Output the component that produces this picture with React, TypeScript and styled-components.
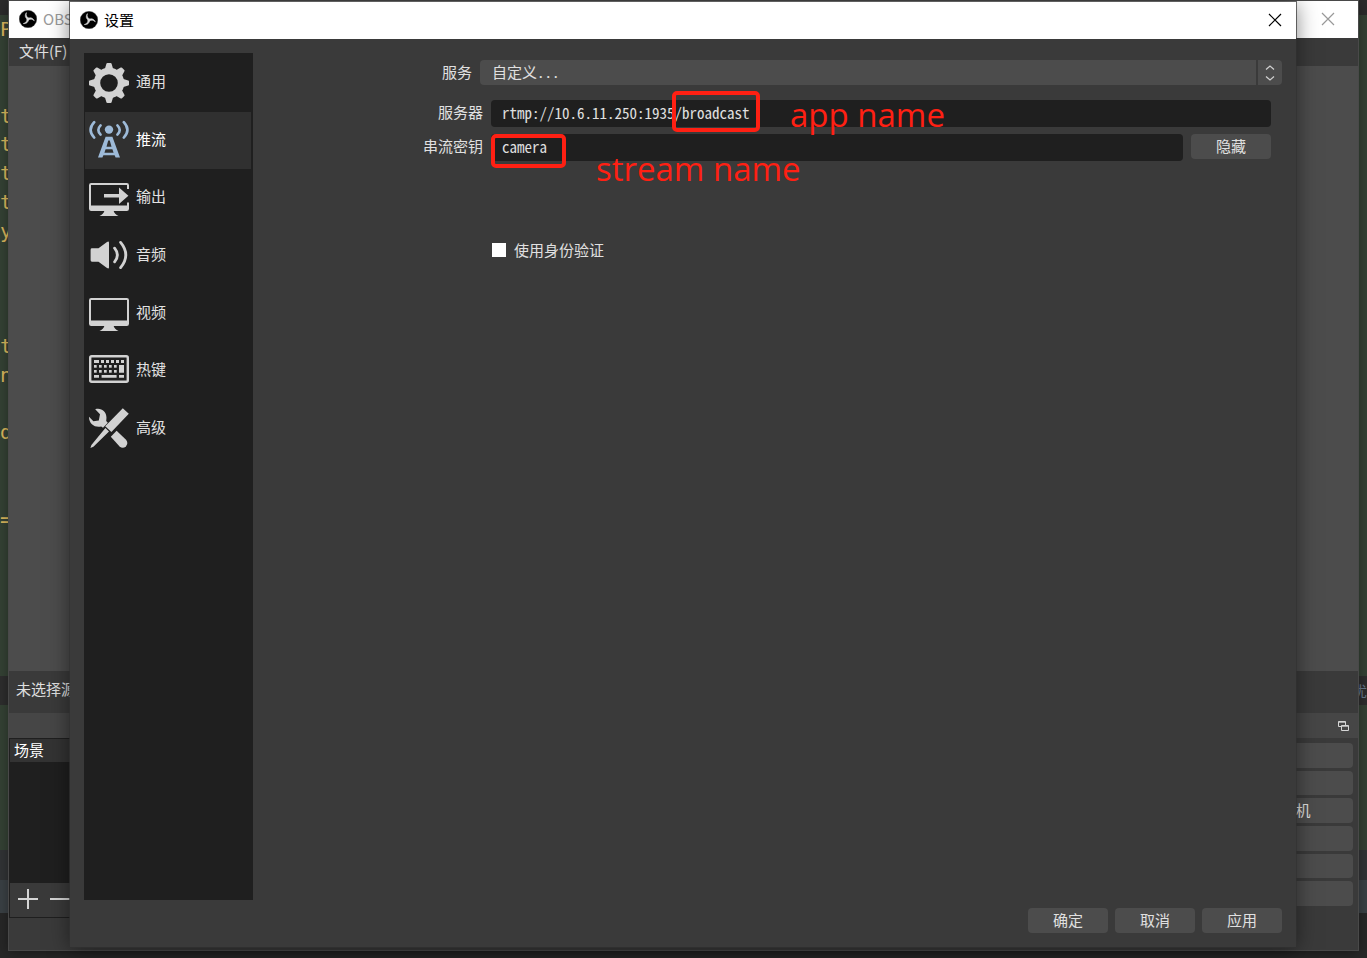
import React from 'react';
import styled, { createGlobalStyle } from 'styled-components';

const sans = '"Noto Sans CJK SC", "Open Sans", sans-serif';
const fixed = '"Noto Sans Mono CJK SC", "Noto Sans CJK SC", monospace';

const GlobalStyle = createGlobalStyle`
  * { box-sizing: border-box; }
  body { margin: 0; background: #272727; font-family: ${sans}; font-size: 15px; color: #e0e0e0; }
  button, input, select { font: inherit; color: inherit; border: 0; margin: 0; padding: 0; }
`;

const Desktop = styled.div`
  position: relative;
  display: flex;
  flex-direction: column;
  min-height: 100vh;
  overflow: hidden;
`;

const Band = styled.div<{ $color: string; $height?: number }>`
  background: ${(p) => p.$color};
  ${(p) => (p.$height ? `height: ${p.$height}px; flex: none;` : 'flex: 1;')}
`;

const StatusBand = styled(Band)`
  display: flex;
  align-items: center;
  justify-content: flex-end;
  color: #66788a;
`;

const CodeLines = styled.div`
  display: grid;
  grid-auto-rows: 1fr;
  align-items: center;
  height: 518px;
  font: 20px "DejaVu Sans Mono", monospace;
  line-height: 28px;
  color: #d8b55c;
`;

const Window = styled.section`
  position: absolute;
  display: flex;
  flex-direction: column;
  background: #3a3a3a;
`;

const MainWindow = styled(Window)`
  inset: 1px 9px 8px 9px;
  box-shadow: 0 0 0 1px #494949, 0 2px 12px rgba(0, 0, 0, 0.4);
  overflow: hidden;
`;

const Dialog = styled(Window)`
  inset: 2px 71px 11px 70px;
  box-shadow: 0 0 0 1px rgba(50, 50, 50, 0.7), 0 2px 20px rgba(0, 0, 0, 0.5);
`;

const TitleBar = styled.header<{ $muted?: boolean }>`
  display: flex;
  align-items: center;
  gap: 6px;
  height: 37px;
  flex: none;
  padding: 0 12px 2px 10px;
  background: #fff;
  color: ${(p) => (p.$muted ? '#999' : '#000')};
`;

const Title = styled.h1`
  flex: 1;
  margin: 0;
  font-size: 15px;
  font-weight: 400;
`;

const CloseButton = styled.button<{ $inset?: number }>`
  display: grid;
  place-items: center;
  width: 18px;
  height: 18px;
  margin-right: ${(p) => p.$inset ?? 0}px;
  background: none;
`;

const MenuBar = styled.nav`
  height: 28px;
  flex: none;
  padding: 0 10px;
  line-height: 26px;
`;

const Preview = styled.div`
  flex: 1;
  background: #4c4c4c;
`;

const SourceBar = styled.div`
  height: 42px;
  flex: none;
  padding: 0 7px;
  font-family: ${fixed};
  font-weight: 300;
  line-height: 36px;
`;

const DockTitle = styled.div`
  display: flex;
  align-items: center;
  justify-content: flex-end;
  height: 25px;
  flex: none;
  padding: 2px 9px 0;
  background: #464646;
`;

const Docks = styled.div`
  display: flex;
  justify-content: space-between;
  height: 212px;
  flex: none;
`;

const SceneDock = styled.div`
  display: flex;
  flex-direction: column;
  width: 200px;
  height: 180px;
  border: 1px solid #1f1f1f;
  background: #1f1f1f;
`;

const Scene = styled.div`
  height: 23px;
  padding-left: 4px;
  background: #333;
  color: #fff;
  line-height: 22px;
`;

const SceneTools = styled.div`
  display: flex;
  align-items: center;
  gap: 12px;
  height: 34px;
  margin-top: auto;
  padding: 0 0 2px 8px;
  background: #3a3a3a;
`;

const ToolButton = styled.button`
  display: grid;
  width: 20px;
  height: 20px;
  background: none;
`;

const ControlDock = styled.div`
  display: grid;
  grid-auto-rows: 1fr;
  gap: 3px;
  width: 190px;
  height: 163px;
  margin: 5px 5px 0 0;
`;

const Button = styled.button`
  min-width: 80px;
  height: 25px;
  padding-bottom: 2px;
  border-radius: 4px;
  background: #4c4c4c;
  font-family: ${fixed};
  font-weight: 300;
  line-height: 22px;
`;

const ControlButton = styled(Button)`
  height: auto;
`;

const DialogBody = styled.div`
  display: flex;
  flex: 1;
  gap: 14px;
  padding: 14px 14px 8px;
`;

const Sidebar = styled.nav`
  width: 169px;
  flex: none;
  padding: 1px 2px 1px 1px;
  background: #1f1f1f;
`;

const Categories = styled.div`
  display: grid;
  grid-auto-rows: 1fr;
  height: 403px;
`;

const Category = styled.a<{ $active?: boolean }>`
  display: flex;
  align-items: center;
  gap: 7px;
  padding-left: 4px;
  background: ${(p) => (p.$active ? '#303030' : 'none')};
  color: ${(p) => (p.$active ? '#fff' : '#e2e2e2')};
  text-decoration: none;
  svg { color: ${(p) => (p.$active ? '#9dbad8' : '#d2d2d2')}; flex: none; }
  span { padding-bottom: 4px; }
`;

const Form = styled.form`
  flex: 1;
  min-width: 0;
  padding-top: 7px;
  font-family: ${fixed};
  font-weight: 300;
`;

const Row = styled.div<{ $label: number; $inset?: number }>`
  display: flex;
  gap: 8px;
  margin-right: ${(p) => p.$inset ?? 0}px;
  margin-bottom: 7px;
  label { width: ${(p) => p.$label}px; flex: none; text-align: right; line-height: 24px; }
`;

const ServiceRow = styled(Row)`
  margin-bottom: 15px;
`;

const SelectBox = styled.div`
  position: relative;
  flex: 1;
`;

const Select = styled.select`
  display: block;
  width: 100%;
  height: 25px;
  padding: 0 0 2px 12px;
  border-radius: 4px;
  background: #4c4c4c;
  appearance: none;
`;

const SelectArrows = styled.span`
  position: absolute;
  inset: 0 0 0 auto;
  display: grid;
  place-items: center;
  width: 26px;
  border-left: 2px solid #3a3a3a;
  pointer-events: none;
`;

const Input = styled.input`
  flex: 1;
  min-width: 0;
  height: 27px;
  padding: 0 11px 2px;
  border-radius: 4px;
  background: #1f1f1f;
`;

const CheckRow = styled.label`
  display: flex;
  align-items: center;
  gap: 8px;
  margin: 78px 0 0 225px;
  line-height: 22px;
`;

const Checkbox = styled.input`
  width: 14px;
  height: 14px;
  appearance: none;
  background: #fff;
`;

const Footer = styled.footer`
  display: flex;
  justify-content: flex-end;
  gap: 7px;
  padding: 0 14px 14px;
`;

const Highlight = styled.div<{ $x: number; $y: number; $w: number; $h: number }>`
  position: absolute;
  left: ${(p) => p.$x}px;
  top: ${(p) => p.$y}px;
  width: ${(p) => p.$w}px;
  height: ${(p) => p.$h}px;
  border: 4px solid #ff2013;
  border-radius: 5px;
  pointer-events: none;
`;

const Note = styled.span<{ $x: number; $y: number }>`
  position: absolute;
  left: ${(p) => p.$x}px;
  top: ${(p) => p.$y}px;
  font: 33px "Open Sans", sans-serif;
  line-height: 44px;
  color: #ff2013;
  white-space: nowrap;
`;

const Logo = () => (
  <svg width="18" height="18" viewBox="0 0 18 18" aria-hidden="true">
    <circle cx="9" cy="9" r="8.8" fill="#000" stroke="#555" strokeWidth=".4" />
    {[0, 120, 240].map((a) => (
      <path
        key={a}
        d="M9 9.4C6.4 8.6 5.2 5.6 7.4 2.6C6.8 5.4 7.6 7.4 10 8.2Z"
        fill="#d8d8d8"
        stroke="#d8d8d8"
        strokeWidth=".5"
        transform={`rotate(${a} 9 9)`}
      />
    ))}
  </svg>
);

const Icon = ({ children }: { children: React.ReactNode }) => (
  <svg width="40" height="40" viewBox="0 0 40 40" fill="currentColor" aria-hidden="true">{children}</svg>
);

const Cross = ({ color }: { color: string }) => (
  <svg width="14" height="14" viewBox="0 0 14 14" stroke={color} strokeWidth="1.2" aria-hidden="true">
    <path d="M1 1 13 13M13 1 1 13" />
  </svg>
);

const GearIcon = () => (
  <Icon>
    <circle cx="20" cy="20" r="12" fill="none" stroke="currentColor" strokeWidth="6.4" />
    {[0, 45, 90, 135, 180, 225, 270, 315].map((a) => (
      <path key={a} d="M14 7 16 5.6 17.4 .8Q17.6 0 18.4 0H21.6Q22.4 0 22.6 .8L24 5.6 26 7Z" transform={`rotate(${a} 20 20)`} />
    ))}
  </Icon>
);

const StreamIcon = () => (
  <Icon>
    <circle cx="20" cy="9.6" r="4.2" />
    <g fill="none" stroke="currentColor" strokeWidth="2.6" strokeLinecap="round">
      <path d="M5.2 2.2Q-2 10 5.2 17.6M34.8 2.2Q42 10 34.8 17.6" />
      <path d="M11.6 5.4Q7 10 11.6 14.6M28.4 5.4Q33 10 28.4 14.6" />
    </g>
    <path fillRule="evenodd" d="M16.6 16.8H23.4L31 37.6H26.6L25.6 35.3H14.4L13.4 37.6H9ZM19.2 20.5 17.5 26.7H22.5L20.8 20.5ZM16.6 29.3 15.4 32.7H24.6L23.4 29.3Z" />
  </Icon>
);

const stand = 'M15.5 32.5H24.5C25 35 27 36.8 29.5 38H10.5C13 36.8 15 35 15.5 32.5Z';

const OutputIcon = () => (
  <Icon>
    <path d="M40 11H38V7H2V27.5H38V24.5H40V30.8Q40 33 37.8 33H2.2Q0 33 0 30.8V7.2Q0 5 2.2 5H37.8Q40 5 40 7.2Z" />
    <path d={stand} />
    <path d="M15 16H30V9.4L39.4 17.7 30 26V19.4H15Z" />
  </Icon>
);

const AudioIcon = () => (
  <Icon>
    <path d="M3 13.3H9.5L18 6.9Q20 5.7 20 7.7V32.3Q20 34.3 18 33.1L9.5 26.7H3Q1.6 26.7 1.6 25.3V14.7Q1.6 13.3 3 13.3Z" />
    <path d="M25.6 13.2Q31.2 20 25.6 26.8M31.6 7.4Q42 20 31.6 32.6" fill="none" stroke="currentColor" strokeWidth="2.8" strokeLinecap="round" />
  </Icon>
);

const VideoIcon = () => (
  <Icon>
    <path fillRule="evenodd" d="M2.2 5H37.8Q40 5 40 7.2V30.8Q40 33 37.8 33H2.2Q0 33 0 30.8V7.2Q0 5 2.2 5ZM2 7V27.5H38V7Z" />
    <path d={stand} />
  </Icon>
);

const KeyboardIcon = () => (
  <Icon>
    <g transform="translate(0 -1)">
      <rect x="1.2" y="6.2" width="37.6" height="25.6" rx="1.5" fill="none" stroke="currentColor" strokeWidth="2.4" />
      <path d="M5 10h5v3h-5zM12 10h3v3h-3zM17 10h3v3h-3zM22 10h3v3h-3zM27 10h3v3h-3zM32 10h3v3h-3z" />
      {[15, 20].map((y) => [5, 10, 15, 20, 25].map((x) => <rect key={`${x}-${y}`} x={x} y={y} width="2.7" height="2.7" />))}
      <path d="M30 15h5v7.7h-5zM5 25h5v2.7h-5zM12.6 25h15v2.7h-15zM30 25h5v2.7h-5z" />
    </g>
  </Icon>
);

const ToolsIcon = () => (
  <Icon>
    <path d="M6.2 1.2C12.4 -.8 18.2 4 17.4 10.8L17.2 13 18.8 14.8 14 19.8 12.2 18.4C6 20 -.2 15.8 0 8.8L4.4 13.2 9.8 12.4 11 6.2Z" />
    <path d="M33.8 .2 39.8 5.8 22.4 24 16.2 18.2ZM16.4 20 20 23.6 4.4 38.8 1.4 40 2.4 37Z" />
    <path d="M27.6 22.8 36.8 31.6Q39.8 35 37 38.2 33.8 41.2 30.6 38.4L21.8 28.8Z" />
  </Icon>
);

const categories = [
  { name: '通用', icon: <GearIcon /> },
  { name: '推流', icon: <StreamIcon /> },
  { name: '输出', icon: <OutputIcon /> },
  { name: '音频', icon: <AudioIcon /> },
  { name: '视频', icon: <VideoIcon /> },
  { name: '热键', icon: <KeyboardIcon /> },
  { name: '高级', icon: <ToolsIcon /> },
];

const codeLines = ['P', '', '', 't', 't', 't', 't', 'y', '', '', '', 't', 'n', '', 'd', '', '', '='];
const controls = ['', '', '启动虚拟摄像机', '', '', ''];

export default function App() {
  return (
    <>
      <GlobalStyle />
      <Desktop>
        <Band $color="#2b2b2b" $height={15} />
        <Band $color="#344134">
          <CodeLines>
            {codeLines.map((line, i) => <span key={i}>{line}</span>)}
          </CodeLines>
        </Band>
        <StatusBand $color="#2d2d2d" $height={29}>优</StatusBand>
        <Band $color="#344134" $height={145} />
        <Band $color="#313335" $height={30} />
        <Band $color="#3a4044" $height={33} />
        <Band $color="#272727" $height={45} />

        <MainWindow>
          <TitleBar $muted>
            <Logo />
            <Title>OBS</Title>
            <CloseButton type="button" aria-label="关闭主窗口" $inset={9}><Cross color="#999" /></CloseButton>
          </TitleBar>
          <MenuBar>文件(F)</MenuBar>
          <Preview />
          <SourceBar>未选择源</SourceBar>
          <DockTitle>
            <svg width="11" height="11" viewBox="0 0 11 11" fill="none" stroke="#d5d5d5" aria-hidden="true">
              <path d="M3 5.5H.5V.5H7.5V4M.5 1.2H7.5M3.5 4.5H10.5V9.5H3.5ZM3.5 5.2H10.5" />
            </svg>
          </DockTitle>
          <Docks>
            <SceneDock>
              <Scene>场景</Scene>
              <SceneTools>
                <ToolButton type="button" aria-label="添加场景">
                  <svg width="20" height="20" stroke="#d5d5d5" strokeWidth="2"><path d="M0 10H20M10 0V20" /></svg>
                </ToolButton>
                <ToolButton type="button" aria-label="移除场景">
                  <svg width="20" height="20" stroke="#d5d5d5" strokeWidth="2"><path d="M0 10H20" /></svg>
                </ToolButton>
              </SceneTools>
            </SceneDock>
            <ControlDock>
              {controls.map((c, i) => <ControlButton key={i} type="button">{c}</ControlButton>)}
            </ControlDock>
          </Docks>
        </MainWindow>

        <Dialog role="dialog" aria-label="设置">
          <TitleBar>
            <Logo />
            <Title>设置</Title>
            <CloseButton type="button" aria-label="关闭"><Cross color="#000" /></CloseButton>
          </TitleBar>
          <DialogBody>
            <Sidebar>
              <Categories>
                {categories.map((c) => (
                  <Category key={c.name} href="#" $active={c.name === '推流'}>
                    {c.icon}
                    <span>{c.name}</span>
                  </Category>
                ))}
              </Categories>
            </Sidebar>
            <Form>
              <ServiceRow $label={205}>
                <label htmlFor="service">服务</label>
                <SelectBox>
                  <Select id="service"><option>自定义...</option></Select>
                  <SelectArrows>
                    <svg width="10" height="16" viewBox="0 0 10 16" fill="none" stroke="#d0d0d0" strokeWidth="1.3">
                      <path d="M1 4.5 5 1 9 4.5M1 11.5 5 15 9 11.5" />
                    </svg>
                  </SelectArrows>
                </SelectBox>
              </ServiceRow>
              <Row $label={216} $inset={11}>
                <label htmlFor="server">服务器</label>
                <Input id="server" type="text" defaultValue="rtmp://10.6.11.250:1935/broadcast" />
              </Row>
              <Row $label={216} $inset={11}>
                <label htmlFor="key">串流密钥</label>
                <Input id="key" type="text" defaultValue="camera" />
                <Button type="button">隐藏</Button>
              </Row>
              <CheckRow>
                <Checkbox type="checkbox" />
                使用身份验证
              </CheckRow>
            </Form>
          </DialogBody>
          <Footer>
            <Button type="button">确定</Button>
            <Button type="button">取消</Button>
            <Button type="button">应用</Button>
          </Footer>
        </Dialog>

        <Highlight $x={672} $y={91} $w={88} $h={41} />
        <Highlight $x={491} $y={134} $w={75} $h={34} />
        <Note $x={790} $y={93}>app name</Note>
        <Note $x={596} $y={147}>stream name</Note>
      </Desktop>
    </>
  );
}
